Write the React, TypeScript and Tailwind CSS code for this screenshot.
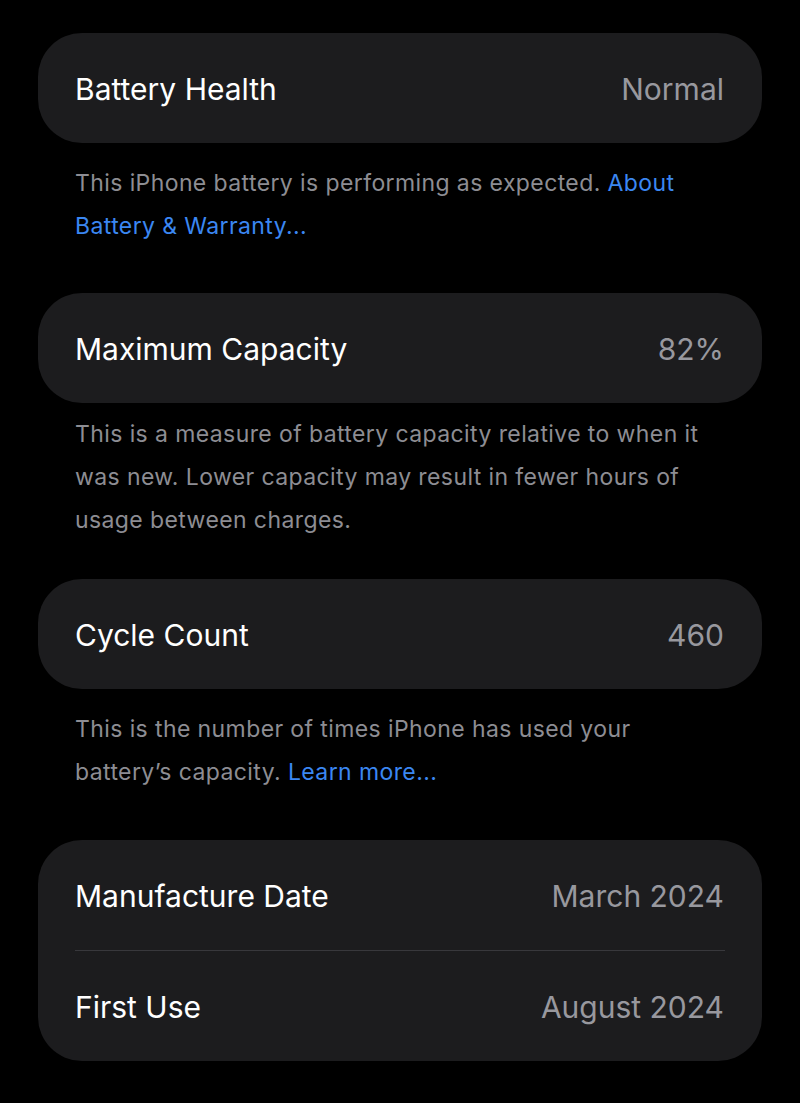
import React from 'react';

const Row: React.FC<{ label: string; value: string }> = ({ label, value }) => (
    <div className="flex h-[110px] items-center justify-between pl-[37px] pr-[38px] pt-[3px]">
        <span className="text-[30px] text-white">{label}</span>
        <span className="text-[30px] text-[#98989e]">{value}</span>
    </div>
);

export default function App() {
    return (
        <div
            className="min-h-[1103px] w-full bg-black px-[38px] pt-[33px]"
            style={{ fontFamily: 'Inter, "Noto Sans", sans-serif' }}
        >
            {/* Battery Health */}
            <div className="rounded-[44px] bg-[#1c1c1e]">
                <Row label="Battery Health" value="Normal" />
            </div>
            <p className="mt-[19px] pl-[37px] pr-[30px] text-[23px] leading-[43px] tracking-[0.4px] text-[#8d8d93]">
                This iPhone battery is performing as expected.{' '}
                <span className="text-[#3b87f2]">About Battery &amp; Warranty...</span>
            </p>

            {/* Maximum Capacity */}
            <div className="mt-[45px] rounded-[44px] bg-[#1c1c1e]">
                <Row label="Maximum Capacity" value="82%" />
            </div>
            <p className="mt-[10px] pl-[37px] pr-[30px] text-[23px] leading-[43px] tracking-[0.4px] text-[#8d8d93]">
                This is a measure of battery capacity relative to when it was new. Lower capacity may result in fewer hours of usage between charges.
            </p>

            {/* Cycle Count */}
            <div className="mt-[37px] rounded-[44px] bg-[#1c1c1e]">
                <Row label="Cycle Count" value="460" />
            </div>
            <p className="mt-[19px] pl-[37px] pr-[30px] text-[23px] leading-[43px] tracking-[0.4px] text-[#8d8d93]">
                This is the number of times iPhone has used your battery’s capacity.{' '}
                <span className="text-[#3b87f2]">Learn more...</span>
            </p>

            {/* Dates */}
            <div className="mt-[46px] rounded-[44px] bg-[#1c1c1e]">
                <Row label="Manufacture Date" value="March 2024" />
                <div className="ml-[37px] mr-[37px] h-px bg-[#38383c]" />
                <Row label="First Use" value="August 2024" />
            </div>
        </div>
    );
}
